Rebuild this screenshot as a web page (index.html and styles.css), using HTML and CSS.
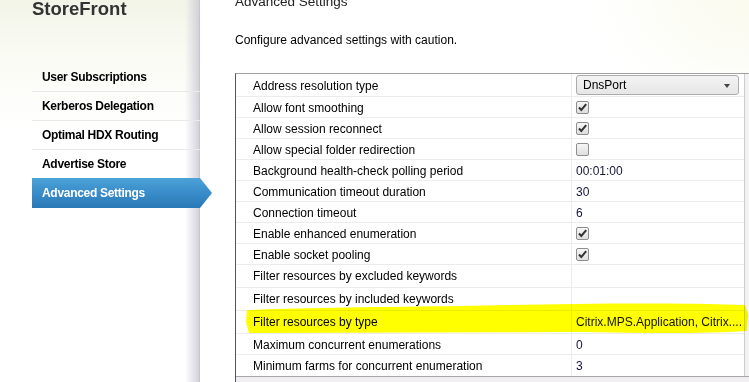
FILE: index.html
```html
<!DOCTYPE html>
<html>
<head>
<meta charset="utf-8">
<title>StoreFront - Advanced Settings</title>
<link rel="stylesheet" href="styles.css">
</head>
<body>
    <div class="page">
        <aside class="sidebar">
            <h1 class="brand">StoreFront</h1>
            <ul class="nav">
                <li class="nav-item">User Subscriptions</li>
                <li class="nav-item">Kerberos Delegation</li>
                <li class="nav-item">Optimal HDX Routing</li>
                <li class="nav-item">Advertise Store</li>
                <li class="nav-item active">Advanced Settings</li>
            </ul>
        </aside>

        <main class="main">
            <h2 class="title">Advanced Settings</h2>
            <p class="hint">Configure advanced settings with caution.</p>

            <div class="grid">
                <div class="grid-inner">
                    <div class="rows">
                        <div class="row first">
                            <div class="name">Address resolution type</div>
                            <div class="value">
                                <div class="select">DnsPort<span class="caret"></span></div>
                            </div>
                        </div>
                        <div class="row">
                            <div class="name">Allow font smoothing</div>
                            <div class="value"><span class="check on"></span></div>
                        </div>
                        <div class="row">
                            <div class="name">Allow session reconnect</div>
                            <div class="value"><span class="check on"></span></div>
                        </div>
                        <div class="row">
                            <div class="name">Allow special folder redirection</div>
                            <div class="value"><span class="check"></span></div>
                        </div>
                        <div class="row">
                            <div class="name">Background health-check polling period</div>
                            <div class="value">00:01:00</div>
                        </div>
                        <div class="row">
                            <div class="name">Communication timeout duration</div>
                            <div class="value">30</div>
                        </div>
                        <div class="row">
                            <div class="name">Connection timeout</div>
                            <div class="value">6</div>
                        </div>
                        <div class="row">
                            <div class="name">Enable enhanced enumeration</div>
                            <div class="value"><span class="check on"></span></div>
                        </div>
                        <div class="row">
                            <div class="name">Enable socket pooling</div>
                            <div class="value"><span class="check on"></span></div>
                        </div>
                        <div class="row tall">
                            <div class="name">Filter resources by excluded keywords</div>
                            <div class="value"></div>
                        </div>
                        <div class="row tall">
                            <div class="name">Filter resources by included keywords</div>
                            <div class="value"></div>
                        </div>
                        <div class="row tall">
                            <div class="name">Filter resources by type</div>
                            <div class="value">Citrix.MPS.Application, Citrix....</div>
                        </div>
                        <div class="row">
                            <div class="name">Maximum concurrent enumerations</div>
                            <div class="value">0</div>
                        </div>
                        <div class="row">
                            <div class="name">Minimum farms for concurrent enumeration</div>
                            <div class="value">3</div>
                        </div>
                    </div>
                    <div class="scrollbar"></div>
                </div>
            </div>
        </main>

        <!-- marker stroke drawn over the screenshot -->
        <svg class="marker" width="749" height="382" viewBox="0 0 749 382">
            <path d="M247,310 C300,308 380,307 460,306 C560,304 650,302 745,305 L748,314 L747,331 C700,334 640,333 580,332 L249,333 L246,322 Z" fill="#ffff00"/>
        </svg>
    </div>
</body>
</html>
```

FILE: styles.css
```css
:root {
    --text-color: #000;
    --line-color: #ececec;
    --active-top: #4ba2d7;
    --active-bottom: #2a79b5;
}

body {
    margin: 0;
    font-family: 'Liberation Sans', Arial, sans-serif;
    color: var(--text-color);
    background-color: #fff;
    overflow: hidden;
}

.page {
    position: relative;
    display: flex;
    width: 749px;
    height: 382px;
    overflow: hidden;
}

/* left column */

.sidebar {
    width: 200px;
    flex: none;
    box-sizing: border-box;
    padding-left: 32px;
    background:
        linear-gradient(to right, rgba(214, 214, 224, 0) 185px, rgba(206, 206, 216, 0.9) 199px, #c6c6ce 199px),
        linear-gradient(to bottom, #f3f4e8, #fafbf4 60px, #fff 130px);
}

.brand {
    margin: -1px 0 0;
    font-size: 18.5px;
    line-height: 19px;
    font-weight: bold;
    color: #333;
}

.nav {
    list-style: none;
    margin: 45px 0 0;
    padding: 0;
}

.nav-item {
    position: relative;
    height: 28px;
    box-sizing: content-box;
    padding: 1px 0 0 10px;
    line-height: 27px;
    font-size: 12px;
    font-weight: bold;
    letter-spacing: -0.3px;
    border-bottom: 1px solid #e9e9e9;
    margin-bottom: -1px;
}

.nav-item:not(.active) {
    margin-bottom: 0;
    height: 27px;
}

.nav-item.active {
    color: #fff;
    border-bottom: none;
    margin-top: -1px;
    height: 28px;
    padding-top: 2px;
    background: linear-gradient(var(--active-top), #3a8ecb 45%, var(--active-bottom));
}

.nav-item.active::after {
    content: "";
    position: absolute;
    top: 0;
    right: -12px;
    width: 12px;
    height: 100%;
    background: linear-gradient(var(--active-top), #3a8ecb 45%, var(--active-bottom));
    clip-path: polygon(0 0, 100% 50%, 0 100%);
}

/* right column */

.main {
    flex: 1;
    min-width: 0;
    display: flex;
    flex-direction: column;
    padding-left: 35px;
    background: radial-gradient(ellipse at top right, #fafaee, #fff 160px);
}

.title {
    margin: -6px 0 0;
    font-size: 13.5px;
    line-height: 16px;
    font-weight: normal;
    color: #222;
}

.hint {
    margin: 23px 0 0;
    font-size: 12px;
    line-height: 14px;
}

.grid {
    flex: 1;
    margin-top: 26px;
    border-left: 1px solid #50526a;
    border-top: 1px solid #a2a2a2;
    background-color: #f1eef1;
}

.grid-inner {
    display: flex;
    background-color: #fff;
    border-bottom: 1px solid #a6a6a6;
}

.rows {
    width: 508px;
    flex: none;
}

.row {
    display: flex;
    height: 20px;
    border-bottom: 1px solid var(--line-color);
    font-size: 12px;
}

.row.first {
    height: 22px;
}

.row.tall {
    height: 22px;
}

.row:last-child {
    height: 21px;
    border-bottom: none;
}

.name {
    width: 318px;
    flex: none;
    padding: 1px 0 0 17px;
    line-height: 20px;
    border-right: 1px solid var(--line-color);
    white-space: nowrap;
}

.row.first .name {
    padding-top: 2px;
}

.value {
    flex: 1;
    padding: 1px 0 0 4px;
    line-height: 20px;
    color: #15153a;
    white-space: nowrap;
}

.select {
    position: relative;
    width: 163px;
    height: 20px;
    box-sizing: border-box;
    margin-top: 0;
    padding-left: 6px;
    line-height: 18px;
    color: #000;
    border: 1px solid #acacac;
    border-radius: 3px;
    background: linear-gradient(#f3f3f3, #e6e6e6);
}

.caret {
    position: absolute;
    right: 8px;
    top: 8px;
    border-left: 3.5px solid transparent;
    border-right: 3.5px solid transparent;
    border-top: 4px solid #444;
}

.check {
    display: inline-block;
    width: 13px;
    height: 13px;
    box-sizing: border-box;
    margin-top: 3px;
    vertical-align: top;
    border: 1px solid #8e8e8e;
    border-radius: 2px;
    background: linear-gradient(#f6f6f6, #dedede);
}

.check.on {
    background:
        url("data:image/svg+xml,%3Csvg xmlns='http://www.w3.org/2000/svg' width='11' height='11'%3E%3Cpath d='M2 5.5 L4.3 8 L9.2 2.2' fill='none' stroke='%23333' stroke-width='2'/%3E%3C/svg%3E") center / 11px 11px no-repeat,
        linear-gradient(#f6f6f6, #dedede);
}

.scrollbar {
    width: 17px;
    flex: none;
    border-left: 1px solid #cdcdcd;
    background-color: #f2f2f2;
}

/* yellow marker annotation */

.marker {
    position: absolute;
    left: 0;
    top: 0;
    pointer-events: none;
    mix-blend-mode: multiply;
}
```
